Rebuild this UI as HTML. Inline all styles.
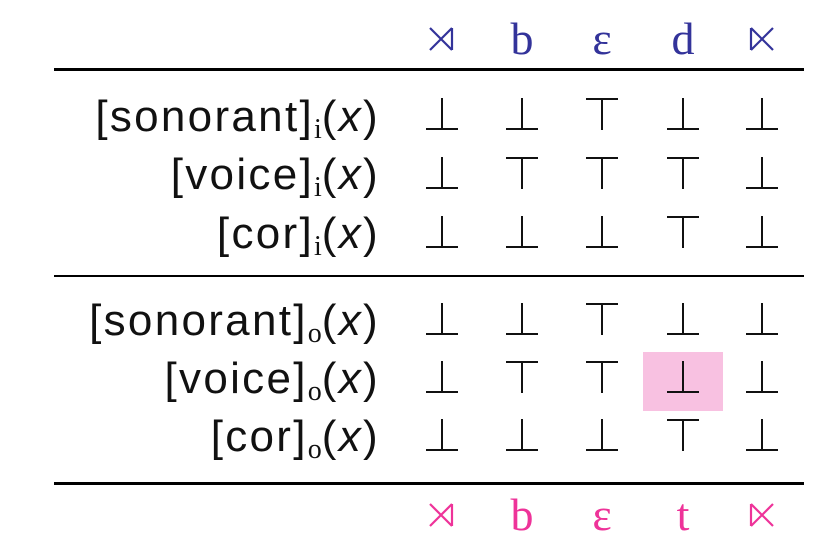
<!DOCTYPE html>
<html><head><style>
body{margin:0;width:826px;height:546px;background:#fff;position:relative;overflow:hidden;font-family:"Liberation Sans",sans-serif}
.a{position:absolute}
.ln{position:absolute;left:54px;width:750px;background:#000}
.lab{position:absolute;right:446px;font-size:44px;line-height:50px;color:#111;white-space:nowrap;letter-spacing:2.3px}
.lab sub{font-family:"Liberation Serif",serif;font-size:28px;vertical-align:-7px;letter-spacing:0}
.lab i{font-style:italic}
.s{position:absolute;width:32px;height:32px}
.s:before{content:"";position:absolute;left:15px;width:2px;height:32px;background:#111}
.s:after{content:"";position:absolute;left:0;width:32px;height:2px;background:#111}
.b:after{bottom:0}.t:after{top:0}
.h{position:absolute;font-family:"Liberation Serif",serif;font-size:46px;line-height:46px;transform:translateX(-50%)}
</style></head><body>
<div class="ln" style="top:68px;height:3px"></div>
<div class="ln" style="top:275px;height:2px"></div>
<div class="ln" style="top:482px;height:3px"></div>
<div class="a" style="left:643px;top:352px;width:80px;height:59px;background:#f8c1e1"></div>

<svg class="a" style="left:0;top:0" width="826" height="546">
<g stroke="#33339a" stroke-width="2.2" fill="none">
<path d="M430 28 L452 50 M452 28 L430 50 M452 28 L452 50"/>
<path d="M751 28 L773 50 M773 28 L751 50 M751 28 L751 50"/>
</g>
<g stroke="#ee3399" stroke-width="2.2" fill="none">
<path d="M430 504 L452 526 M452 504 L430 526 M452 504 L452 526"/>
<path d="M751 504 L773 526 M773 504 L751 526 M751 504 L751 526"/>
</g>
</svg>
<div class="h" style="left:522px;top:16px;color:#33339a">b</div>
<div class="h" style="left:602px;top:16px;color:#33339a">ε</div>
<div class="h" style="left:683px;top:16px;color:#33339a">d</div>
<div class="h" style="left:522px;top:492px;color:#ee3399">b</div>
<div class="h" style="left:602px;top:492px;color:#ee3399">ε</div>
<div class="h" style="left:683px;top:492px;color:#ee3399">t</div>

<div class="lab" style="top:92px">[sonorant]<sub>i</sub>(<i>x</i>)</div>
<div class="lab" style="top:150px">[voice]<sub>i</sub>(<i>x</i>)</div>
<div class="lab" style="top:209px">[cor]<sub>i</sub>(<i>x</i>)</div>
<div class="lab" style="top:296px">[sonorant]<sub>o</sub>(<i>x</i>)</div>
<div class="lab" style="top:354px">[voice]<sub>o</sub>(<i>x</i>)</div>
<div class="lab" style="top:412px">[cor]<sub>o</sub>(<i>x</i>)</div>

<div class="s b" style="left:426px;top:98px"></div><div class="s b" style="left:506px;top:98px"></div><div class="s t" style="left:586px;top:98px"></div><div class="s b" style="left:667px;top:98px"></div><div class="s b" style="left:746px;top:98px"></div>
<div class="s b" style="left:426px;top:157px"></div><div class="s t" style="left:506px;top:157px"></div><div class="s t" style="left:586px;top:157px"></div><div class="s t" style="left:667px;top:157px"></div><div class="s b" style="left:746px;top:157px"></div>
<div class="s b" style="left:426px;top:216px"></div><div class="s b" style="left:506px;top:216px"></div><div class="s b" style="left:586px;top:216px"></div><div class="s t" style="left:667px;top:216px"></div><div class="s b" style="left:746px;top:216px"></div>
<div class="s b" style="left:426px;top:303px"></div><div class="s b" style="left:506px;top:303px"></div><div class="s t" style="left:586px;top:303px"></div><div class="s b" style="left:667px;top:303px"></div><div class="s b" style="left:746px;top:303px"></div>
<div class="s b" style="left:426px;top:361px"></div><div class="s t" style="left:506px;top:361px"></div><div class="s t" style="left:586px;top:361px"></div><div class="s b" style="left:667px;top:361px"></div><div class="s b" style="left:746px;top:361px"></div>
<div class="s b" style="left:426px;top:419px"></div><div class="s b" style="left:506px;top:419px"></div><div class="s b" style="left:586px;top:419px"></div><div class="s t" style="left:667px;top:419px"></div><div class="s b" style="left:746px;top:419px"></div>
</body></html>
